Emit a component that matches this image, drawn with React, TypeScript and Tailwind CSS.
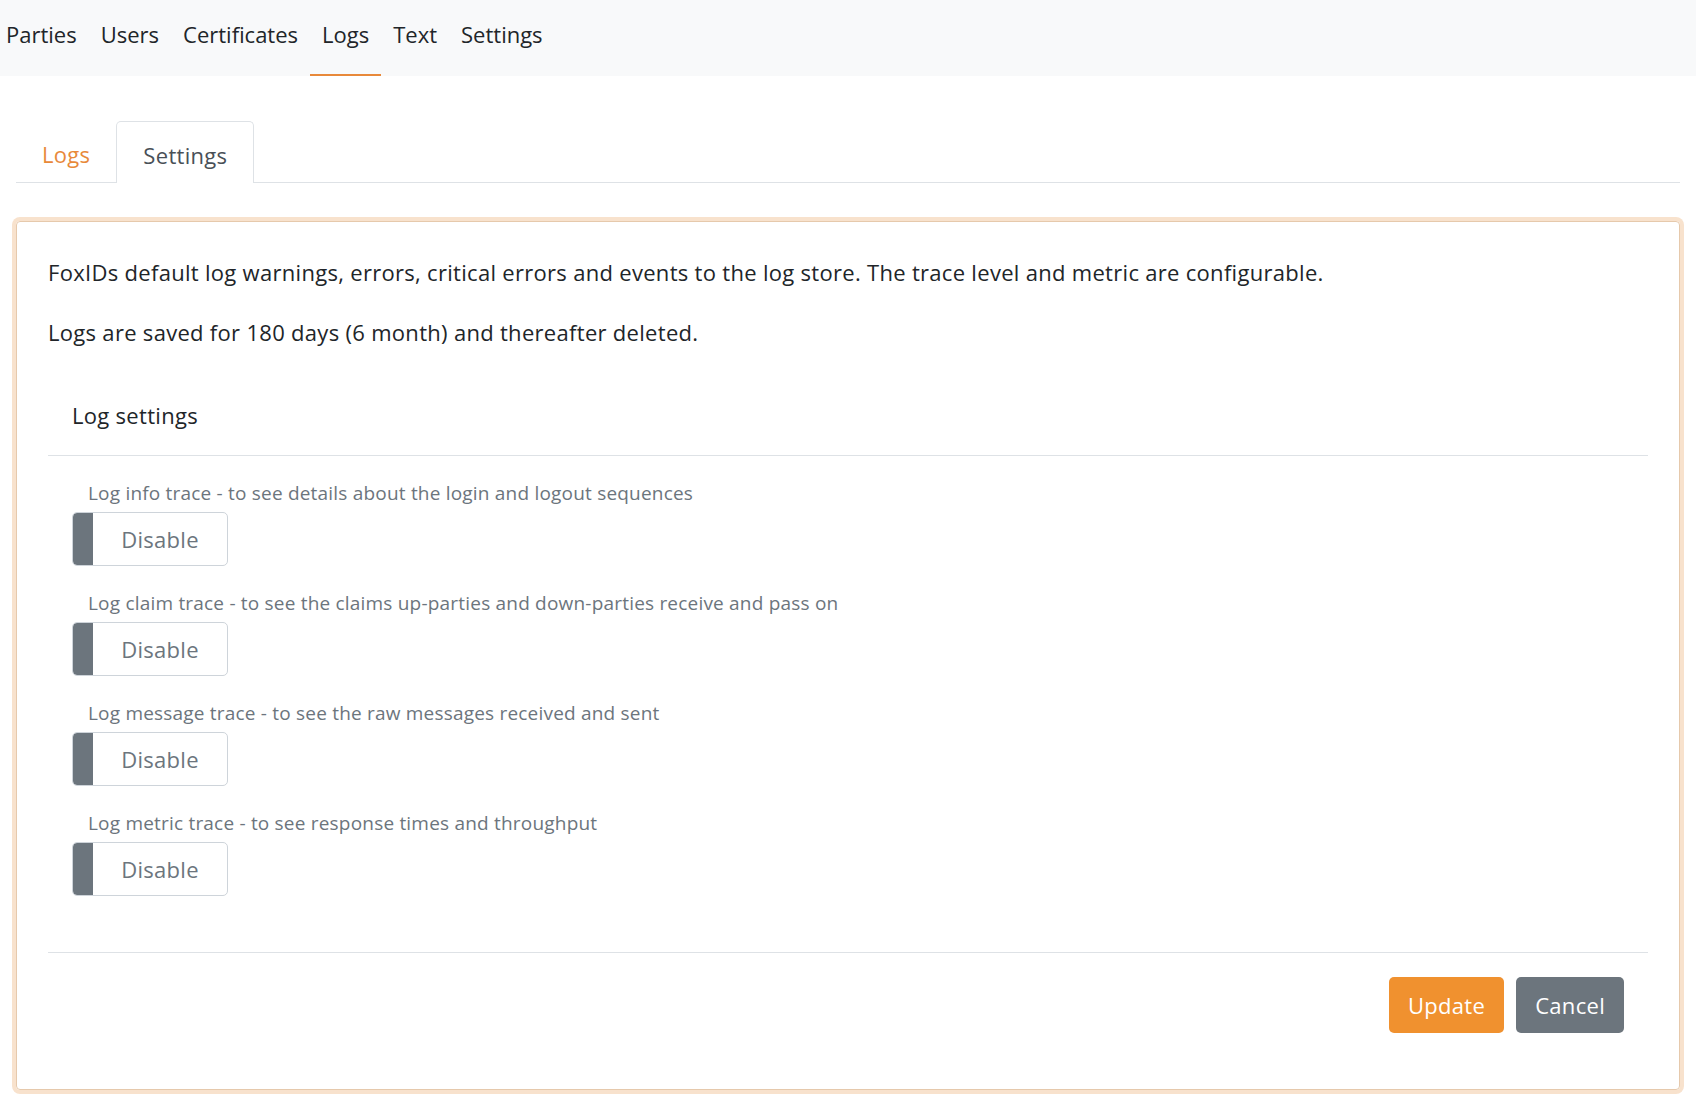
import { useState } from "react";

const font = { fontFamily: '"Open Sans", "Noto Sans", Arial, sans-serif' };

const navItems = ["Parties", "Users", "Certificates", "Logs", "Text", "Settings"];

const logOptions = [
  "Log info trace - to see details about the login and logout sequences",
  "Log claim trace - to see the claims up-parties and down-parties receive and pass on",
  "Log message trace - to see the raw messages received and sent",
  "Log metric trace - to see response times and throughput",
];

function ToggleButton({ on, onClick }: { on: boolean; onClick: () => void }) {
  return (
    <button
      type="button"
      onClick={onClick}
      className="flex h-[54px] w-[156px] overflow-hidden rounded-[5px] border border-[#ced4da] bg-white"
    >
      <span className="h-full w-[20px] shrink-0 rounded-l-[4px] bg-[#6c757d]" />
      <span className="flex flex-1 items-center justify-center text-[22px] tracking-[0.3px] text-[#6c757d]">
        {on ? "Enable" : "Disable"}
      </span>
    </button>
  );
}

export default function App() {
  const [toggles, setToggles] = useState([false, false, false, false]);

  return (
    <div className="min-h-screen bg-white text-[#212529]" style={font}>
      <nav className="flex h-[76px] items-stretch bg-[#f8f9fa]">
        <div className="-ml-[6px] flex items-stretch">
          {navItems.map((item) => (
            <a
              key={item}
              className={
                "flex items-center px-[12px] pb-[7px] text-[22px] text-[#212529] " +
                (item === "Logs" ? "border-b-2 border-[#e8893a] pt-[2px]" : "")
              }
            >
              {item}
            </a>
          ))}
        </div>
      </nav>

      <div className="px-[16px] pt-[45px]">
        <div className="flex h-[62px] items-stretch border-b border-[#dee2e6]">
          <a className="flex items-center px-[26px] pt-[5px] text-[22px] tracking-[0.3px] text-[#e8893a]">
            Logs
          </a>
          <a className="-mb-px flex items-center rounded-t-[5px] border border-b-0 border-[#dee2e6] bg-white px-[26px] pt-[5px] text-[22px] tracking-[0.3px] text-[#495057]">
            Settings
          </a>
        </div>

        <div className="mt-[38px] rounded-[4px] border border-[#e6c9ac] px-[31px] pb-[56px] pt-[34px] text-[22px] tracking-[0.3px] shadow-[0_0_0_4px_#f8e2cd]">
          <p className="leading-[32px]">
            FoxIDs default log warnings, errors, critical errors and events to the log store. The
            trace level and metric are configurable.
          </p>
          <p className="mt-[28px] leading-[32px]">
            Logs are saved for 180 days (6 month) and thereafter deleted.
          </p>

          <div className="mt-[51px] border-b border-[#dee2e6] px-[24px] pb-[24px] leading-[32px]">
            Log settings
          </div>

          <div className="flex flex-col gap-[24px] pl-[24px] pt-[24px]">
            {logOptions.map((label, index) => (
              <div key={label}>
                <div className="pl-[16px] text-[19px] leading-[26px] tracking-[0.2px] text-[#6c757d]">
                  {label}
                </div>
                <div className="mt-[6px]">
                  <ToggleButton
                    on={toggles[index]}
                    onClick={() =>
                      setToggles((current) =>
                        current.map((value, i) => (i === index ? !value : value)),
                      )
                    }
                  />
                </div>
              </div>
            ))}
          </div>

          <div className="mt-[56px] flex justify-end gap-[12px] border-t border-[#dee2e6] pr-[24px] pt-[24px]">
            <button
              type="button"
              className="h-[56px] rounded-[5px] bg-[#f0912f] px-[19px] text-white"
            >
              Update
            </button>
            <button
              type="button"
              className="h-[56px] rounded-[5px] bg-[#6c757d] px-[19px] text-white"
            >
              Cancel
            </button>
          </div>
        </div>
      </div>
    </div>
  );
}
